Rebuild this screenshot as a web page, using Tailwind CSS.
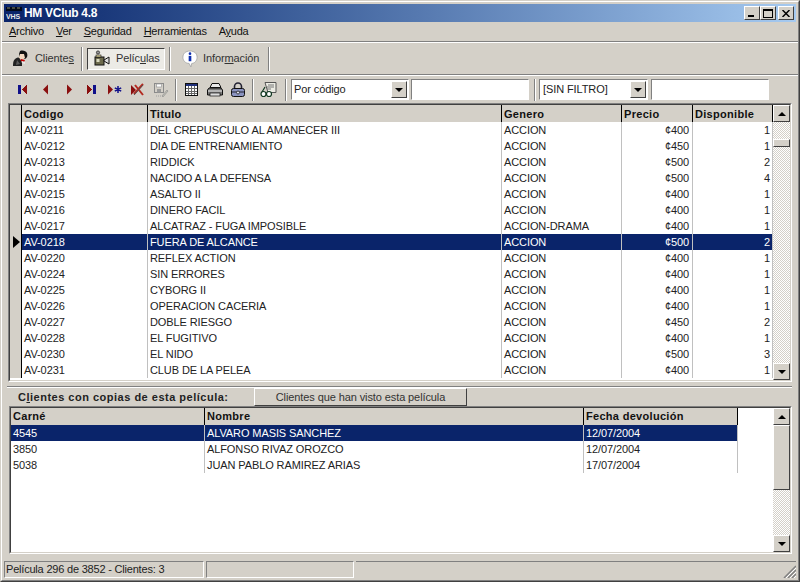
<!DOCTYPE html>
<html lang="es">
<head>
  <meta charset="UTF-8">
  <title>HM VClub 4.8</title>
  <script src="https://cdn.jsdelivr.net/npm/@tailwindcss/browser@4"></script>
</head>
<body class="m-0 overflow-hidden bg-[#d4d0c8]">
<div class="w-[800px] h-[582px] flex flex-col border border-[#d4d0c8] border-r-[#404040] border-b-[#404040] font-['Liberation_Sans',sans-serif] text-[11px] tracking-[-0.1px] leading-none text-black">
 <div class="flex-1 min-h-0 flex flex-col border border-white border-r-[#808080] border-b-[#808080] p-[2px] bg-[#d4d0c8]">

  <!-- title bar -->
  <div class="h-[18px] shrink-0 flex items-center bg-gradient-to-r from-[#0a246a] to-[#a6caf0] pl-[2px] pr-[2px] text-white">
    <svg width="16" height="14" viewBox="0 0 16 14" class="shrink-0"><rect width="16" height="14" fill="#0a246a"/><path d="M0 2h16M0 4h16" stroke="#000" stroke-width="1.5"/><path d="M1 2h3M6 2h3M11 2h3" stroke="#8a8a6a"/><text x="0" y="13" font-size="7" font-weight="700" fill="#e8e8e8" font-family="Liberation Sans">VHS</text></svg>
    <span class="ml-[2px] font-bold text-[12px] tracking-[-0.3px]">HM VClub 4.8</span>
    <div class="ml-auto flex">
      <div class="w-[16px] h-[14px] bg-[#d4d0c8] border border-white border-r-[#404040] border-b-[#404040] flex items-end pl-[3px] pb-[2px]"><div class="w-[6px] h-[2px] bg-black"></div></div>
      <div class="w-[16px] h-[14px] bg-[#d4d0c8] border border-white border-r-[#404040] border-b-[#404040] flex items-center justify-center"><div class="w-[10px] h-[9px] border border-black border-t-2"></div></div>
      <div class="w-[16px] h-[14px] ml-[2px] bg-[#d4d0c8] border border-white border-r-[#404040] border-b-[#404040] flex items-center justify-center"><svg width="8" height="7" viewBox="0 0 8 7"><path d="M0.5 0L7.5 7M7.5 0L0.5 7" stroke="#000" stroke-width="1.5"/></svg></div>
    </div>
  </div>

  <!-- menu -->
  <div class="h-[19px] shrink-0 flex items-center pl-[1px] gap-[12px] text-[#111] tracking-[-0.25px]">
    <span class="ml-[4px]"><u>A</u>rchivo</span>
    <span><u>V</u>er</span>
    <span><u>S</u>eguridad</span>
    <span><u>H</u>erramientas</span>
    <span>A<u>y</u>uda</span>
  </div>
  <div class="h-[2px] shrink-0 border-t border-[#808080] border-b-white border-b -mx-[2px]"></div>

  <!-- main toolbar -->
  <div class="h-[31px] shrink-0 flex items-center text-[#333]">
    <div class="w-[78px] flex items-center ml-[8px]">
      <svg width="17" height="17" viewBox="0 0 17 17"><path d="M8 1c3-1 6 0 7 2 1 3 0 5-2 6l-5-1-1-4z" fill="#111"/><path d="M8 4l4 0 1 4-3 2-3-2z" fill="#f2d8c0"/><path d="M9 9l4 1-1 2-4-1z" fill="#c00000"/><path d="M3 9c2-2 4-2 5 0l2 4 0 3H1c0-3 0-5 2-7z" fill="#222"/><path d="M5 10l3 4-4 1z" fill="#5a5a5a"/><path d="M10 11l3 1v2l-3-1z" fill="#e8e8e8"/></svg>
      <span class="ml-[6px]">Cliente<u>s</u></span>
    </div>
    <div class="w-[2px] h-[24px] ml-[-9px] border-l border-[#808080] border-r border-r-white"></div>
    <div class="ml-[4px] w-[78px] h-[22px] flex items-center pl-[6px] border border-[#404040] border-r-white border-b-white bg-[#ecebe6]">
      <svg width="17" height="17" viewBox="0 0 17 17"><rect x="1" y="7" width="9" height="8" fill="#6c6a4c" stroke="#111"/><rect x="2" y="5" width="5" height="2" fill="#e0d8a0" stroke="#111" stroke-width="0.6"/><circle cx="4" cy="2.5" r="1.6" fill="#999" stroke="#111" stroke-width="0.7"/><path d="M10 10l5-3v7l-5-3z" fill="#ddd" stroke="#111"/><rect x="2.5" y="9" width="3" height="3" fill="#d9d9c0"/></svg>
      <span class="ml-[5px]">Pelíc<u>u</u>las</span>
    </div>
    <div class="w-[2px] h-[24px] ml-[4px] border-l border-[#808080] border-r border-r-white"></div>
    <div class="flex items-center ml-[11px] w-[86px]">
      <svg width="16" height="18" viewBox="0 0 18 20"><path d="M9 1c5 0 8 3 8 7s-3 7-6 7l-1 4-2-4c-4 0-7-3-7-7s3-7 8-7z" fill="#fff" stroke="#a8a8a8"/><circle cx="9" cy="4" r="1.5" fill="#1030b0"/><rect x="7.5" y="6.5" width="3" height="6" fill="#1030b0"/></svg>
      <span class="ml-[5px]">Infor<u>m</u>ación</span>
    </div>
    <div class="w-[2px] h-[24px] border-l border-[#808080] border-r border-r-white"></div>
  </div>
  <div class="h-[2px] shrink-0 border-t border-[#808080] border-b-white border-b -mx-[2px]"></div>

  <!-- navigation toolbar -->
  <div class="h-[27px] shrink-0 flex items-center pl-[7px]">
    <button class="w-[23px] h-[22px] flex items-center justify-center"><svg width="11" height="11" viewBox="0 0 11 11" shape-rendering="crispEdges"><rect x="1" y="1" width="3" height="9" fill="#10108a"/><path d="M10 0.5V10.5L5 5.5z" fill="#8a0f0f"/></svg></button>
    <button class="w-[23px] h-[22px] flex items-center justify-center"><svg width="8" height="11" viewBox="0 0 8 11"><path d="M6 0.5V10.5L1 5.5z" fill="#8a0f0f"/></svg></button>
    <button class="w-[23px] h-[22px] flex items-center justify-center"><svg width="8" height="11" viewBox="0 0 8 11"><path d="M2 0.5V10.5L7 5.5z" fill="#8a0f0f"/></svg></button>
    <button class="w-[23px] h-[22px] flex items-center justify-center"><svg width="11" height="11" viewBox="0 0 11 11" shape-rendering="crispEdges"><path d="M1 0.5V10.5L6 5.5z" fill="#8a0f0f"/><rect x="7" y="1" width="3" height="9" fill="#10108a"/></svg></button>
    <button class="w-[23px] h-[22px] flex items-center justify-center"><svg width="15" height="11" viewBox="0 0 15 11"><path d="M1 0.5V10.5L6 5.5z" fill="#8a0f0f"/><path d="M11 2v7M7.8 3.8l6.4 3.4M14.2 3.8L7.8 7.2" stroke="#10108a" stroke-width="1.5"/></svg></button>
    <button class="w-[23px] h-[22px] flex items-center justify-center"><svg width="15" height="13" viewBox="0 0 15 13"><path d="M1 2V12L6 7z" fill="#8a0f0f"/><path d="M4 11L13 1M5 2l8 10" stroke="#b32a20" stroke-width="2"/><path d="M4 12L13 2" stroke="#555" stroke-width="1"/></svg></button>
    <button class="w-[23px] h-[22px] flex items-center justify-center"><svg width="16" height="16" viewBox="0 0 16 16"><rect x="1.5" y="1.5" width="9" height="9" fill="#d4d0c8" stroke="#8a8a8a"/><rect x="3.5" y="2" width="5" height="3" fill="#fff" stroke="#9a9a9a" stroke-width="0.7"/><rect x="4" y="7" width="4" height="3.5" fill="#9a9a9a"/><path d="M9 14l5-6 1 1-5 6z" fill="#c0c0b8" stroke="#8a8a8a" stroke-width="0.6"/><path d="M3 14h5" stroke="#a0a0a0" stroke-dasharray="1 1"/></svg></button>
    <div class="w-[2px] h-[22px] ml-[3px] border-l border-[#808080] border-r border-r-white"></div>
    <button class="ml-[3px] w-[23px] h-[22px] flex items-center justify-center"><svg width="13" height="13" viewBox="0 0 13 13" shape-rendering="crispEdges"><rect x="0.5" y="0.5" width="12" height="12" fill="#fff" stroke="#111"/><rect x="1" y="1" width="11" height="2" fill="#20307a"/><path d="M3.5 3v9M6.5 3v9M9.500 3v9M1 5.500h11M1 8h11M1 10.500h11" stroke="#666"/></svg></button>
    <button class="w-[23px] h-[22px] flex items-center justify-center"><svg width="16" height="14" viewBox="0 0 16 14"><path d="M5 0.500h7l2 4H3z" fill="#e8e8e8" stroke="#111"/><path d="M2 5h12l1.500 2v5H.5V7z" fill="#7a7a7a" stroke="#111"/><path d="M1 8h14" stroke="#eee"/><rect x="3" y="10" width="10" height="3" fill="#ddd" stroke="#111" stroke-width="0.7"/></svg></button>
    <button class="w-[23px] h-[22px] flex items-center justify-center"><svg width="14" height="15" viewBox="0 0 14 15"><path d="M3.500 7V4.500a3.500 3.500 0 0 1 7 0V7" fill="none" stroke="#223" stroke-width="1.600"/><rect x="0.500" y="6.500" width="13" height="8" rx="2" fill="#8a93c0" stroke="#111"/><path d="M1 10h12" stroke="#223"/><circle cx="7" cy="10.500" r="1.500" fill="#dfe2f0" stroke="#111" stroke-width="0.7"/></svg></button>
    <div class="w-[2px] h-[22px] ml-[3px] border-l border-[#808080] border-r border-r-white"></div>
    <button class="ml-[3px] w-[23px] h-[22px] flex items-center justify-center"><svg width="17" height="16" viewBox="0 0 17 16"><path d="M5 0.500h11v10H8z" fill="#ecece4" stroke="#555"/><path d="M8 3h6M7 5h7M7 7h4" stroke="#777"/><circle cx="3.500" cy="12" r="2.500" fill="#fff" stroke="#103820" stroke-width="1.200"/><circle cx="9" cy="12" r="2.500" fill="#fff" stroke="#103820" stroke-width="1.200"/><path d="M6 12h.5M2 10l3-5" stroke="#103820" stroke-width="1.200"/></svg></button>
    <div class="w-[2px] h-[22px] ml-[5px] border-l border-[#808080] border-r border-r-white"></div>

    <div class="ml-[4px] w-[118px] h-[21px] flex items-center border border-[#808080] border-r-white border-b-white bg-white text-[#222]">
      <span class="pl-[2px] flex-1">Por código</span>
      <div class="w-[16px] h-[17px] mr-[1px] bg-[#d4d0c8] border border-white border-r-[#404040] border-b-[#404040] flex items-center justify-center"><div class="w-0 h-0 border-x-[4px] border-x-transparent border-t-[4px] border-t-black"></div></div>
    </div>
    <div class="ml-[2px] w-[118px] h-[21px] border border-[#808080] border-r-white border-b-white bg-white"></div>
    <div class="w-[2px] h-[22px] ml-[5px] border-l border-[#808080] border-r border-r-white"></div>
    <div class="ml-[3px] w-[109px] h-[21px] flex items-center border border-[#808080] border-r-white border-b-white bg-white text-[#222]">
      <span class="pl-[3px] flex-1">[SIN FILTRO]</span>
      <div class="w-[16px] h-[17px] mr-[1px] bg-[#d4d0c8] border border-white border-r-[#404040] border-b-[#404040] flex items-center justify-center"><div class="w-0 h-0 border-x-[4px] border-x-transparent border-t-[4px] border-t-black"></div></div>
    </div>
    <div class="ml-[3px] w-[118px] h-[21px] border border-[#808080] border-r-white border-b-white bg-white"></div>
  </div>

  <!-- peliculas grid -->
  <div class="h-[279px] shrink-0 ml-[4px] mr-[4px] flex border border-[#808080] border-r-white border-b-white">
    <div class="flex-1 min-w-0 flex flex-col border border-[#404040] border-r-[#d4d0c8] border-b-[#d4d0c8] bg-white overflow-hidden">
      <div class="flex flex-1 min-h-0">
        <div class="flex-1 min-w-0" id="movies"></div>
        <div class="w-[17px] shrink-0 flex flex-col bg-[repeating-conic-gradient(#fff_0_25%,#d4d0c8_0_50%)] bg-[length:2px_2px]">
          <div class="h-[17px] bg-[#d4d0c8] border border-white border-r-[#404040] border-b-[#404040] flex items-center justify-center"><div class="w-0 h-0 border-x-[4px] border-x-transparent border-b-[4px] border-b-black"></div></div>
          <div class="h-[8px] mt-[17px] bg-[#d4d0c8] border border-white border-r-[#404040] border-b-[#404040]"></div>
          <div class="h-[17px] mt-auto bg-[#d4d0c8] border border-white border-r-[#404040] border-b-[#404040] flex items-center justify-center"><div class="w-0 h-0 border-x-[4px] border-x-transparent border-t-[4px] border-t-black"></div></div>
        </div>
      </div>
    </div>
  </div>

  <!-- splitter -->
  <div class="h-[5px] shrink-0 ml-[3px] mr-[4px] border-b border-[#808080]"></div>

  <!-- clientes -->
  <div class="h-[19px] shrink-0 flex items-center border-t border-white ml-[3px] mr-[4px]">
    <span class="ml-[11px] w-[236px] font-bold tracking-[0.5px] text-[#222]">C<u>l</u>ientes con copias de esta película:</span>
    <div class="w-[213px] h-[18px] flex items-center justify-center bg-[#d4d0c8] border border-white border-r-[#404040] border-b-[#404040] text-[#333]">Clientes que han visto esta película</div>
  </div>

  <div class="h-[148px] shrink-0 ml-[5px] mr-[4px] flex border border-[#808080] border-r-white border-b-white">
    <div class="flex-1 min-w-0 flex border border-[#404040] border-r-[#d4d0c8] border-b-[#d4d0c8] bg-white overflow-hidden">
      <div class="flex-1 min-w-0" id="clients"></div>
      <div class="w-[17px] shrink-0 flex flex-col bg-[repeating-conic-gradient(#fff_0_25%,#d4d0c8_0_50%)] bg-[length:2px_2px]">
        <div class="h-[17px] bg-[#d4d0c8] border border-white border-r-[#404040] border-b-[#404040] flex items-center justify-center"><div class="w-0 h-0 border-x-[4px] border-x-transparent border-b-[4px] border-b-black"></div></div>
        <div class="h-[65px] bg-[#d4d0c8] border border-white border-r-[#404040] border-b-[#404040]"></div>
        <div class="h-[17px] mt-auto bg-[#d4d0c8] border border-white border-r-[#404040] border-b-[#404040] flex items-center justify-center"><div class="w-0 h-0 border-x-[4px] border-x-transparent border-t-[4px] border-t-black"></div></div>
      </div>
    </div>
  </div>

  <!-- status bar -->
  <div class="h-[17px] shrink-0 mt-[7px] flex gap-[2px] text-[#222]">
    <div class="w-[200px] flex items-center pl-[1px] tracking-[-0.2px] border border-[#808080] border-r-white border-b-white">Película 296 de 3852 - Clientes: 3</div>
    <div class="w-[148px] border border-[#808080] border-r-white border-b-white"></div>
    <div class="flex-1 relative border-t border-[#808080]">
      <svg class="absolute right-0 bottom-0" width="13" height="13" viewBox="0 0 13 13"><path d="M13 1L1 13M13 5L5 13M13 9L9 13" stroke="#808080" stroke-width="1.500"/><path d="M13 3L3 13M13 7L7 13M13 11L11 13" stroke="#fff"/></svg>
    </div>
  </div>
 </div>
</div>

<script>
const movies = [
  ['AV-0211','DEL CREPUSCULO AL AMANECER III','ACCION','400',1],
  ['AV-0212','DIA DE ENTRENAMIENTO','ACCION','450',1],
  ['AV-0213','RIDDICK','ACCION','500',2],
  ['AV-0214','NACIDO A LA DEFENSA','ACCION','500',4],
  ['AV-0215','ASALTO II','ACCION','400',1],
  ['AV-0216','DINERO FACIL','ACCION','400',1],
  ['AV-0217','ALCATRAZ - FUGA IMPOSIBLE','ACCION-DRAMA','400',1],
  ['AV-0218','FUERA DE ALCANCE','ACCION','500',2],
  ['AV-0220','REFLEX ACTION','ACCION','400',1],
  ['AV-0224','SIN ERRORES','ACCION','400',1],
  ['AV-0225','CYBORG II','ACCION','400',1],
  ['AV-0226','OPERACION CACERIA','ACCION','400',1],
  ['AV-0227','DOBLE RIESGO','ACCION','450',2],
  ['AV-0228','EL FUGITIVO','ACCION','400',1],
  ['AV-0230','EL NIDO','ACCION','500',3],
  ['AV-0231','CLUB DE LA PELEA','ACCION','400',1]
];
const clients = [
  ['4545','ALVARO MASIS SANCHEZ','12/07/2004'],
  ['3850','ALFONSO RIVAZ OROZCO','12/07/2004'],
  ['5038','JUAN PABLO RAMIREZ ARIAS','17/07/2004']
];

/* ===== peliculas ===== */
let html = `<div class="flex h-[17px] bg-[#d4d0c8] font-bold text-[#111] tracking-[0.3px]">
  <div class="w-[12px] border-r border-black"></div>
  <div class="w-[126px] border-r border-black pl-[2px] pt-[1px] flex items-center">Codigo</div>
  <div class="w-[354px] border-r border-black pl-[2px] pt-[1px] flex items-center">Titulo</div>
  <div class="w-[120px] border-r border-black pl-[2px] pt-[1px] flex items-center">Genero</div>
  <div class="w-[71px] border-r border-black pl-[2px] pt-[1px] flex items-center">Precio</div>
  <div class="w-[80px] border-r border-black pl-[2px] pt-[1px] flex items-center">Disponible</div>
</div>`;
movies.forEach((m, i) => {
  const sel = i === 7;
  html += `<div class="flex h-[16px] ${sel ? 'bg-[#0a246a] text-white' : 'bg-white text-[#222]'}">
    <div class="w-[12px] bg-[#d4d0c8] border-r border-black flex items-center justify-end pr-[1px]">${sel ? '<div class="w-0 h-0 border-y-[6px] border-y-transparent border-l-[7px] border-l-black"></div>' : ''}</div>
    <div class="w-[126px] border-r border-[#c0c0c0] pl-[2px] pt-[1px] flex items-center">${m[0]}</div>
    <div class="w-[354px] border-r border-[#c0c0c0] pl-[2px] pt-[1px] flex items-center">${m[1]}</div>
    <div class="w-[120px] border-r border-[#c0c0c0] pl-[2px] pt-[1px] flex items-center">${m[2]}</div>
    <div class="w-[71px] border-r border-[#c0c0c0] pr-[3px] pt-[1px] flex items-center justify-end">¢${m[3]}</div>
    <div class="w-[80px] border-r border-[#c0c0c0] pr-[2px] pt-[1px] flex items-center justify-end">${m[4]}</div>
  </div>`;
});
document.getElementById('movies').innerHTML = html;

/* ===== clientes ===== */
let rows = `<div class="flex h-[17px] w-[727px] bg-[#d4d0c8] font-bold text-[#111] tracking-[0.3px]">
  <div class="w-[194px] border-r border-black pl-[2px] flex items-center">Carné</div>
  <div class="w-[379px] border-r border-black pl-[2px] flex items-center">Nombre</div>
  <div class="w-[154px] border-r border-black pl-[2px] flex items-center">Fecha devolución</div>
</div>`;
clients.forEach((c, i) => {
  const sel = i === 0;
  rows += `<div class="flex h-[16px] w-[727px] ${sel ? 'bg-[#0a246a] text-white' : 'bg-white text-[#222]'}">
    <div class="w-[194px] border-r border-[#c0c0c0] pl-[2px] pt-[1px] flex items-center">${c[0]}</div>
    <div class="w-[379px] border-r border-[#c0c0c0] pl-[2px] pt-[1px] flex items-center">${c[1]}</div>
    <div class="w-[154px] border-r border-[#c0c0c0] pl-[2px] pt-[1px] flex items-center">${c[2]}</div>
  </div>`;
});
document.getElementById('clients').innerHTML = rows;
</script>
</body>
</html>
